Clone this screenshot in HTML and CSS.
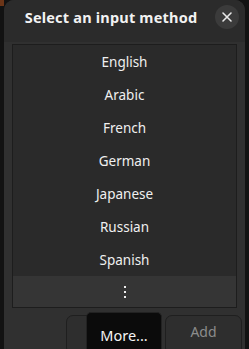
FILE: index.html
```html
<!DOCTYPE html>
<html>
<head>
<meta charset="utf-8">
<link rel="stylesheet" href="styles.css">
</head>
<body>
<div class="window">
  <div class="header">
    <div class="title">Select an input method</div>
    <button class="close" aria-label="Close">
      <svg width="12" height="12" viewBox="0 0 12 12"><path d="M2 2L10 10M10 2L2 10" stroke="#e8e8e8" stroke-width="1.6" stroke-linecap="round"/></svg>
    </button>
  </div>
  <div class="content">
    <div class="list">
      <div class="row">English</div>
      <div class="row">Arabic</div>
      <div class="row">French</div>
      <div class="row">German</div>
      <div class="row">Japanese</div>
      <div class="row">Russian</div>
      <div class="row">Spanish</div>
      <div class="row more">
        <svg width="4" height="12" viewBox="0 0 4 12"><rect x="1" y="0" width="2" height="2" fill="#eee"/><rect x="1" y="5" width="2" height="2" fill="#eee"/><rect x="1" y="10" width="2" height="2" fill="#eee"/></svg>
      </div>
    </div>
    <div class="actions">
      <button class="btn cancel">Cancel</button>
      <button class="btn add">Add</button>
      <div class="tooltip">More...</div>
    </div>
  </div>
</div>
</body>
</html>
```
FILE: styles.css
```css
html, body {
  margin: 0;
  padding: 0;
  height: 349px;
  overflow: hidden;
}
body {
  background: linear-gradient(#6b3518, #6b3518) 0 0 / 4px 6px no-repeat, #121212;
  font-family: "Noto Sans", "DejaVu Sans", sans-serif;
  color: #f2f2f2;
}
.window {
  margin-left: 4px;
  width: 241px;
  height: 349px;
  background: #303030;
  border-radius: 10px 10px 0 0;
  overflow: hidden;
}
.header {
  height: 42px;
  background: #2b2b2b;
  display: flex;
  align-items: center;
  position: relative;
}
.title {
  flex: 1;
  text-align: center;
  font-weight: bold;
  font-size: 14.5px;
  padding-right: 27px;
  letter-spacing: 0.2px;
  margin-top: -8px;
}
.close {
  position: absolute;
  right: 6px;
  top: 5px;
  width: 24px;
  height: 24px;
  border-radius: 50%;
  border: none;
  background: #3b3b3b;
  display: flex;
  align-items: center;
  justify-content: center;
  padding: 0;
}
.content {
  padding: 2px 8px 0 8px;
}
.list {
  border: 1px solid #1d1d1d;
  background: #2a2a2a;
  display: flex;
  flex-direction: column;
}
.row {
  height: 33px;
  display: flex;
  align-items: center;
  justify-content: center;
  font-size: 13.5px;
  color: #f0f0f0;
}
.row.more {
  height: 31px;
  background: #353535;
}
.actions {
  position: relative;
  display: flex;
  justify-content: flex-end;
  gap: 14px;
  padding-top: 7px;
}
.btn {
  height: 40px;
  border: 1px solid #1f1f1f;
  border-radius: 7px;
  background: #2e2e2e;
  font-family: "Noto Sans", "DejaVu Sans", sans-serif;
  font-size: 14px;
  color: #8c8c8c;
  padding: 0;
  display: flex;
  justify-content: center;
  padding-top: 6px;
}
.cancel {
  width: 85px;
  color: #6e6e6e;
}
.add {
  width: 77px;
  margin-right: -5px;
}
.tooltip {
  position: absolute;
  left: 74px;
  top: 4px;
  width: 76px;
  height: 44px;
  background: #0b0b0b;
  border: 1px solid #222;
  border-radius: 5px;
  color: #f4f4f4;
  font-size: 14.5px;
  text-align: center;
  padding-top: 12px;
  box-sizing: border-box;
}
```
